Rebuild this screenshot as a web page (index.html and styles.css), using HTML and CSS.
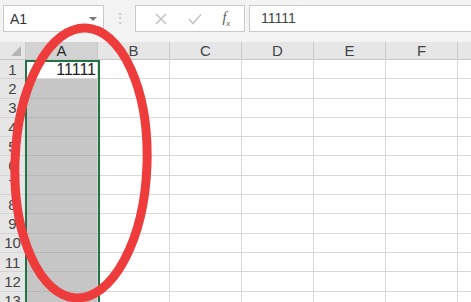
FILE: index.html
```html
<!DOCTYPE html>
<html lang="en">
<head>
  <meta charset="UTF-8" />
  <title>Sheet</title>
  <link rel="stylesheet" href="styles.css">
</head>
<body>
  <div class="toolbar">
    <div class="name-box">
      <span>A1</span>
      <span class="arrow"></span>
    </div>
    <div class="dots">⋮</div>
    <div class="func-box">
      <svg width="14" height="14" viewBox="0 0 14 14"><path d="M2 2 L12 12 M12 2 L2 12" stroke="#c4c4c4" stroke-width="1.6" fill="none"/></svg>
      <svg width="16" height="14" viewBox="0 0 16 14"><path d="M2 7 L6 11.5 L14 2.5" stroke="#c4c4c4" stroke-width="1.6" fill="none"/></svg>
      <span class="fx">f<sub>x</sub></span>
    </div>
    <div class="formula">11111</div>
  </div>

  <div class="sheet">
    <div class="corner"><span class="tri"></span></div>
    <div class="col-head sel">A</div>
    <div class="col-head">B</div>
    <div class="col-head">C</div>
    <div class="col-head">D</div>
    <div class="col-head">E</div>
    <div class="col-head">F</div>
    <div class="col-head"></div>
  </div>

  <div class="selection"></div>
  <svg class="circle" width="471" height="302" viewBox="0 0 471 302">
    <ellipse cx="81" cy="163" rx="66" ry="135" transform="rotate(2 81 163)" fill="none" stroke="#ee3b3b" stroke-width="9"/>
  </svg>

  <script>
    const sheet = document.querySelector(".sheet");
    for (let r = 1; r <= 13; r++) {
      const head = document.createElement("div");
      head.className = "row-head";
      head.textContent = r;
      sheet.appendChild(head);
      for (let c = 0; c < 7; c++) {
        const cell = document.createElement("div");
        cell.className = "cell";
        if (c === 0) {
          cell.classList.add(r === 1 ? "active" : "picked");
          if (r === 1) cell.textContent = "11111";
        }
        sheet.appendChild(cell);
      }
    }
  </script>
</body>
</html>
```

FILE: styles.css
```css
* {
  margin: 0;
  padding: 0;
  box-sizing: border-box;
}
body {
  font-family: "Liberation Sans", Arial, sans-serif;
  background: #f3f3f3;
  width: 471px;
  height: 302px;
  overflow: hidden;
  position: relative;
}
.toolbar {
  height: 42px;
  display: flex;
  align-items: flex-start;
  padding: 5px 0 0 3px;
}
.name-box {
  width: 101px;
  height: 27px;
  background: #fff;
  border: 1px solid #c9c9c9;
  display: flex;
  align-items: center;
  justify-content: space-between;
  padding: 0 6px 0 6px;
  font-size: 14px;
  color: #333;
}
.arrow {
  width: 0;
  height: 0;
  border-left: 4px solid transparent;
  border-right: 4px solid transparent;
  border-top: 4px solid #777;
}
.dots {
  width: 31px;
  text-align: center;
  color: #c0c0c0;
  font-size: 14px;
  line-height: 27px;
}
.func-box {
  width: 110px;
  height: 27px;
  background: #fff;
  border: 1px solid #c9c9c9;
  display: flex;
  align-items: center;
  justify-content: space-around;
  padding: 0 4px 0 8px;
}
.fx {
  font-family: "Liberation Serif", serif;
  font-style: italic;
  font-size: 14px;
  color: #555;
}
.fx sub {
  font-size: 9px;
}
.formula {
  flex: 1;
  height: 27px;
  margin-left: 4px;
  background: #fff;
  border: 1px solid #c9c9c9;
  border-right: none;
  padding-left: 11px;
  font-size: 14px;
  line-height: 25px;
  color: #444;
}
.sheet {
  display: grid;
  grid-template-columns: 26px repeat(7, 72px);
  grid-template-rows: 18px repeat(13, 19.3px);
  background: #fff;
}
.corner,
.col-head,
.row-head {
  background: #e6e6e6;
  color: #444;
  font-size: 15px;
  display: flex;
  align-items: center;
  justify-content: center;
  border-right: 1px solid #cacaca;
  border-bottom: 1px solid #c6c6c6;
}
.corner {
  position: relative;
}
.tri {
  position: absolute;
  right: 4px;
  bottom: 3px;
  width: 0;
  height: 0;
  border-left: 10px solid transparent;
  border-bottom: 10px solid #b4b4b4;
}
.col-head.sel {
  background: #d2d2d2;
  color: #2a2a2a;
}
.row-head {
  border-bottom: 1px solid #d4d4d4;
}
.cell {
  border-right: 1px solid #d9d9d9;
  border-bottom: 1px solid #d9d9d9;
  font-size: 16px;
  color: #222;
  text-align: right;
  padding-right: 1px;
  line-height: 19px;
}
.cell.picked {
  background: #c6c6c6;
  border-bottom-color: #b8b8b8;
}
.selection {
  position: absolute;
  left: 25px;
  top: 60px;
  width: 75px;
  height: 250px;
  border: 2px solid #217346;
}
.circle {
  position: absolute;
  left: 0;
  top: 0;
}
```
